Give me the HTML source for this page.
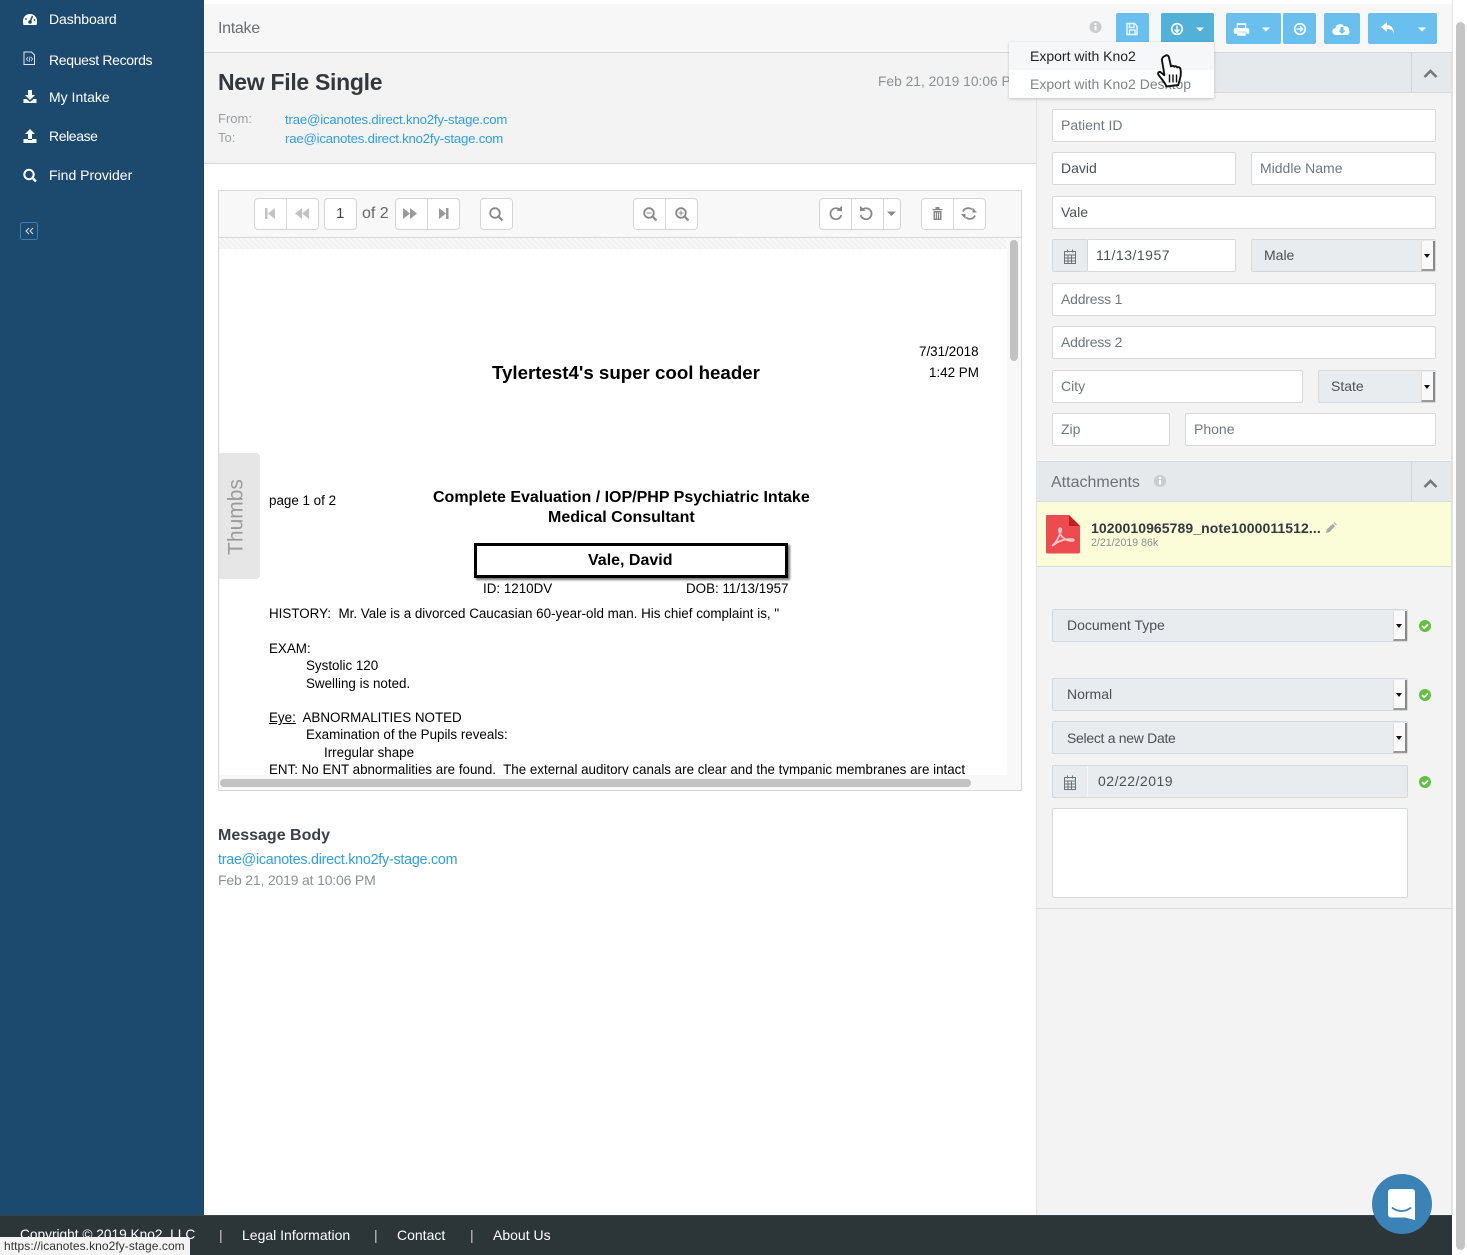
<!DOCTYPE html>
<html><head><meta charset="utf-8"><style>
*{box-sizing:border-box}
html,body{margin:0;padding:0;width:1467px;height:1255px;overflow:hidden;background:#fff}
body{position:relative;font-family:"Liberation Sans",sans-serif;color:#3a4045}
.a{position:absolute}
.t{position:absolute;white-space:nowrap;line-height:18px;font-size:14px}
.n{color:#fff;font-size:14px;left:49px}
.f{position:absolute;background:#fff;border:1px solid #d6d9db;border-radius:2px;font-size:14px;line-height:30px;padding-left:8px;color:#6f787e;height:33px;white-space:nowrap}
.v{color:#4a5055}
.s{background:#e8ecee;color:#4a5055;padding-left:12px}
.s i{position:absolute;right:0;top:1px;width:14px;height:30px;background:#f9f9f9;border-right:2px solid #888;border-bottom:2px solid #999;border-left:1px solid #ddd}
.s i:after{content:"";position:absolute;left:2px;top:13px;border:3.500px solid transparent;border-top:4px solid #111;border-bottom:0}
.b{position:absolute;top:13px;height:31px;background:#69c0ef;border-radius:2px}
.g{position:absolute;top:198px;height:32px;border:1px solid #d5d5d5;border-radius:4px;background:#fff}
.g u{position:absolute;top:0;bottom:0;width:1px;background:#d5d5d5}
.d{position:absolute;white-space:nowrap;color:#000;font-size:13.400px;line-height:16px}
a{color:#2f9ee6;text-decoration:none}
</style></head><body>
<!-- backgrounds -->
<div class="a" style="left:0;top:0;width:204px;height:1215px;background:#1c4a6e"></div>
<div class="a" style="left:204px;top:4px;width:1248px;height:49px;background:#f7f7f7;border-bottom:1px solid #d8d8d8"></div>
<div class="a" style="left:204px;top:53px;width:832px;height:111px;background:#f3f3f3;border-bottom:1px solid #d8d8d8"></div>
<div class="a" style="left:1036px;top:53px;width:416px;height:1162px;background:#f3f3f3;border-left:1px solid #e2e2e2;border-right:1px solid #e2e2e2"></div>
<div class="a" style="left:1037px;top:53px;width:414px;height:40px;background:#e6e9ec;border-bottom:1px solid #d8dbde"></div>
<div class="a" style="left:1411px;top:53px;width:1px;height:40px;background:#d3d6d9"></div>
<div class="a" style="left:1456px;top:22px;width:9px;height:1228px;background:#c4c4c4;border-radius:5px"></div>
<div class="a" style="left:1452px;top:0;width:1px;height:1255px;background:#e4e4e4"></div>

<!-- sidebar -->
<div class="t n" style="top:10px;letter-spacing:-.1px">Dashboard</div>
<div class="t n" style="top:51px;letter-spacing:-.33px">Request Records</div>
<div class="t n" style="top:88px">My Intake</div>
<div class="t n" style="top:127px;letter-spacing:-.4px">Release</div>
<div class="t n" style="top:166px">Find Provider</div>
<svg class="a" style="left:0;top:0" width="204" height="250" fill="#fff">
<path d="M23 21a7 7 0 1 1 14 0c0 1.500-.2 3-.5 4h-13c-.3-1-.5-2.500-.5-4z"/>
<path d="M30 22l2.500-6" stroke="#1c4a6e" stroke-width="1.600"/><circle cx="30" cy="22" r="1.800" fill="#1c4a6e"/>
<circle cx="26" cy="19" r=".9" fill="#1c4a6e"/><circle cx="34.500" cy="20" r=".9" fill="#1c4a6e"/>
<path d="M24 52h7.500l3 3v9.500h-10.500z" fill="none" stroke="#dfe6eb" stroke-width="1"/>
<path d="M28 57l-1.600 2 1.600 2M31 57l1.600 2-1.600 2M30 56.500l-1 5.500" fill="none" stroke="#dfe6eb" stroke-width=".8"/>
<path d="M28 90h4v5h3l-5 5-5-5h3zM23.500 99h3l3.500 3 3.500-3h3v4h-13z"/>
<path d="M30 129l5 5h-3v5h-4v-5h-3zM23.500 139h4.500v1h4v-1h4.500v4h-13z"/>
<circle cx="29" cy="174.500" r="4.700" fill="none" stroke="#fff" stroke-width="2"/><path d="M32.500 178l3.500 3.500" stroke="#fff" stroke-width="2.400"/>
<rect x="20.500" y="222.500" width="17" height="17" rx="2" fill="#1c4a6e" stroke="#3d7fb0"/>
<path d="M29 228l-3 3 3 3M33 228l-3 3 3 3" fill="none" stroke="#d5e2ea" stroke-width="1"/>
</svg>

<!-- top -->
<div class="t" style="left:218px;top:20px;font-size:16px;color:#6b6f72;letter-spacing:-.3px">Intake</div>
<div class="t" style="left:218px;top:68px;font-size:23px;line-height:28px;font-weight:bold;color:#33383c;letter-spacing:-.3px">New File Single</div>
<div class="t" style="left:218px;top:110px;font-size:13px;color:#9a9ea1">From:</div>
<div class="t" style="left:218px;top:129px;font-size:13px;color:#9a9ea1">To:</div>
<a class="t" style="left:285px;top:111px;font-size:13.200px;letter-spacing:-.18px">trae@icanotes.direct.kno2fy-stage.com</a>
<a class="t" style="left:285px;top:130px;font-size:13.200px;letter-spacing:-.2px">rae@icanotes.direct.kno2fy-stage.com</a>
<div class="a" style="left:870px;top:73px;width:139px;height:18px;overflow:hidden"><div class="t" style="left:8px;top:0;color:#8d9194;font-size:13.800px">Feb 21, 2019 10:06 PM</div></div>

<!-- toolbar buttons -->
<div class="b" style="left:1116px;width:33px"></div>
<div class="b" style="left:1161px;width:53px;background:#52b1d8"></div>
<div class="b" style="left:1226px;width:55px"></div>
<div class="b" style="left:1283px;width:33px"></div>
<div class="b" style="left:1324px;width:36px"></div>
<div class="b" style="left:1368px;width:69px"></div>
<svg class="a" style="left:1080px;top:10px" width="370" height="40">
<circle cx="15.500" cy="17" r="6" fill="#c9cbcd"/><rect x="14.500" y="16" width="2" height="4.500" fill="#fff"/><rect x="14.500" y="13" width="2" height="2" fill="#fff"/>
<g fill="none" stroke="#e6f5fd" stroke-width="1.500"><path d="M47 13.500h7.500l2.500 2.500v8.500h-10z"/><path d="M49.500 14v3.500h4.500V14M49.500 24v-4h5.500v4"/></g>
<circle cx="97" cy="19" r="5.300" fill="none" stroke="#fff" stroke-width="1.600"/><path d="M97 15.500v6M94.500 19.500l2.500 2.700 2.500-2.700" fill="none" stroke="#fff" stroke-width="1.300"/>
<path d="M116 17.500h8l-4 4z" fill="#fff"/>
<path d="M157 18.500v-5h9v5M155 18.500h13a1 1 0 0 1 1 1v4h-2.500v-2h-9v2H155a1 1 0 0 1-1-1v-3a1 1 0 0 1 1-1zM157.500 22.500h8v3h-8z" fill="#fff" stroke="#fff" stroke-width=".5"/><path d="M158 15h7v3h-7z" fill="#69c0ef"/>
<path d="M182 17.500h8l-4 4z" fill="#fff"/>
<circle cx="220" cy="19" r="5.300" fill="none" stroke="#fff" stroke-width="1.600"/><path d="M216.500 19h6M220 16.500l2.700 2.500-2.700 2.500" fill="none" stroke="#fff" stroke-width="1.300"/>
<path d="M256 25a3.500 3.500 0 0 1-.5-7 4.500 4.500 0 0 1 8.500-1.500 3.700 3.700 0 0 1 5 3.500 4 4 0 0 1-1 5z" fill="#fff"/><path d="M260.500 17h3v3.500h2l-3.500 3.500-3.500-3.500h2z" fill="#69c0ef"/>
<path d="M307 12l-6 5 6 5v-3c4 0 6 1 7 5 0-6-3-9-7-9z" fill="#fff"/>
<path d="M338 17.500h8l-4 4z" fill="#fff"/>
</svg>
<!-- right panel top chevron -->
<svg class="a" style="left:1420px;top:65px" width="22" height="16"><path d="M4.500 12l6-6 6 6" fill="none" stroke="#777" stroke-width="2.600"/></svg>

<!-- form -->
<div class="f" style="left:1052px;top:109px;width:384px">Patient ID</div>
<div class="f v" style="left:1052px;top:152px;width:184px">David</div>
<div class="f" style="left:1251px;top:152px;width:185px">Middle Name</div>
<div class="f v" style="left:1052px;top:196px;width:384px">Vale</div>
<div class="f" style="left:1052px;top:239px;width:36px;background:#e8ecee;padding:0"></div>
<div class="f v" style="left:1087px;top:239px;width:149px;letter-spacing:.5px">11/13/1957</div>
<div class="f s" style="left:1251px;top:239px;width:185px">Male<i></i></div>
<div class="f" style="left:1052px;top:283px;width:384px;letter-spacing:-.2px">Address 1</div>
<div class="f" style="left:1052px;top:326px;width:384px;letter-spacing:-.2px">Address 2</div>
<div class="f" style="left:1052px;top:370px;width:251px">City</div>
<div class="f s" style="left:1318px;top:370px;width:118px">State<i></i></div>
<div class="f" style="left:1052px;top:413px;width:118px">Zip</div>
<div class="f" style="left:1185px;top:413px;width:251px">Phone</div>

<!-- attachments -->
<div class="a" style="left:1037px;top:461px;width:414px;height:41px;background:#e6e9ec;border-top:1px solid #d8dbde;border-bottom:1px solid #d8dbde"></div>
<div class="a" style="left:1411px;top:462px;width:1px;height:39px;background:#d3d6d9"></div>
<div class="t" style="left:1051px;top:474px;font-size:16px;color:#6b7277">Attachments</div>
<svg class="a" style="left:1150px;top:472px" width="20" height="18"><circle cx="10" cy="9" r="6" fill="#c9cbcd"/><rect x="9" y="8" width="2" height="4.500" fill="#fff"/><rect x="9" y="5" width="2" height="2" fill="#fff"/></svg>
<svg class="a" style="left:1420px;top:475px" width="22" height="16"><path d="M4.500 12l6-6 6 6" fill="none" stroke="#777" stroke-width="2.600"/></svg>
<div class="a" style="left:1037px;top:502px;width:414px;height:65px;background:#fbfdd9;border-bottom:1px solid #d8dbde"></div>
<svg class="a" style="left:1046px;top:514px" width="36" height="42">
<path d="M1 1h22l11 11v26a1.500 1.500 0 0 1-1.500 1.500h-31A1.500 1.500 0 0 1 0 38V2a1 1 0 0 1 1-1z" fill="#ee4b50"/><path d="M23 1l11 11h-11z" fill="#c41f1f"/>
<path d="M6 32c4-3 7-9 9-15 1-3-2-4-2-1 0 5 6 11 13 11 3 0 2-2-1-2-6 0-13 2-19 7z" fill="none" stroke="#f7c9ca" stroke-width="1.800"/>
</svg>
<div class="t" style="left:1091px;top:519px;font-size:14px;font-weight:bold;color:#33383c;letter-spacing:.08px">1020010965789_note1000011512...</div>
<svg class="a" style="left:1324px;top:521px" width="14" height="14"><path d="M2 12l.7-3.200 6-6 2.500 2.500-6 6zM9.500 2l1-.8 2.300 2.300-.8 1z" fill="#a8aaa8"/></svg>
<div class="t" style="left:1091px;top:534px;font-size:10.600px;color:#8a8f92">2/21/2019 86k</div>

<div class="f s" style="left:1052px;top:609px;width:356px;padding-left:14px">Document Type<i></i></div>
<div class="f s" style="left:1052px;top:678px;width:356px;padding-left:14px">Normal<i></i></div>
<div class="f s" style="left:1052px;top:721px;width:356px;padding-left:14px;letter-spacing:-.3px;line-height:32px">Select a new Date<i></i></div>
<div class="f" style="left:1052px;top:765px;width:356px;background:#e8ecee;padding:0"></div>
<div class="a" style="left:1087px;top:766px;width:1px;height:31px;background:#f7f7f7"></div>
<div class="t" style="left:1098px;top:772px;color:#4a5055;letter-spacing:.5px">02/22/2019</div>
<div class="f" style="left:1052px;top:808px;width:356px;height:90px"></div>
<div class="a" style="left:1037px;top:908px;width:414px;height:1px;background:#dcdcdc"></div>
<svg class="a" style="left:1040px;top:240px" width="400" height="560">
<g fill="none" stroke="#6d7377" stroke-width="1">
<path d="M24.500 11.500h11v12h-11zM24.500 15h11M24.500 18h11M24.500 21h11M28 15v8.500M31.500 15v8.500M27.500 9.500v3M32.500 9.500v3"/>
<path d="M24.500 537.500h11v12h-11zM24.500 541h11M24.500 544h11M24.500 547h11M28 541v8.500M31.500 541v8.500M27.500 535.500v3M32.500 535.500v3"/>
</g>
<g><circle cx="385" cy="386" r="6" fill="#62c13f"/><path d="M382 386l2.200 2.200 3.800-3.800" fill="none" stroke="#fff" stroke-width="1.700"/></g>
<g><circle cx="385" cy="455" r="6" fill="#62c13f"/><path d="M382 455l2.200 2.200 3.800-3.800" fill="none" stroke="#fff" stroke-width="1.700"/></g>
<g><circle cx="385" cy="542" r="6" fill="#62c13f"/><path d="M382 542l2.200 2.200 3.800-3.800" fill="none" stroke="#fff" stroke-width="1.700"/></g>
</svg>

<!-- viewer -->
<div class="a" style="left:218px;top:190px;width:804px;height:601px;background:#f8f8f8;border:1px solid #d8d8d8"></div>
<div class="a" style="left:219px;top:237px;width:802px;height:1px;background:#d8d8d8"></div>
<div class="a" style="left:219px;top:238px;width:787px;height:11px;background:repeating-linear-gradient(45deg,#f1f1f1 0 2px,#f8f8f8 2px 4px)"></div>
<div class="g" style="left:254px;width:65px;"><u style="left:31px"></u></div>
<div class="g" style="left:324px;width:33px"></div>
<div class="t" style="left:336px;top:205px;font-size:15px;color:#444">1</div>
<div class="t" style="left:362px;top:205px;font-size:16px;color:#666">of 2</div>
<div class="g" style="left:395px;width:65px"><u style="left:31px"></u></div>
<div class="g" style="left:480px;width:33px"></div>
<div class="g" style="left:633px;width:65px"><u style="left:31px"></u></div>
<div class="g" style="left:819px;width:82px"><u style="left:31px"></u><u style="left:63px"></u></div>
<div class="g" style="left:921px;width:65px"><u style="left:31px"></u></div>
<svg class="a" style="left:218px;top:198px" width="790" height="32">
<g fill="#c2c2c2"><path d="M47 10h2.500v11H47zM57 10v11l-7-5.500z"/><path d="M77 15.500l7-5.500v11zM84 15.500l7-5.500v11z"/></g>
<g fill="#999"><path d="M185 10l7 5.500-7 5.500zM192 10l7 5.500-7 5.500z"/><path d="M221 10l7 5.500-7 5.500zM228 10h2.500v11H228z"/></g>
<g fill="none" stroke="#888" stroke-width="1.800">
<circle cx="277" cy="15" r="4.800"/><path d="M280.500 18.500l4 4" stroke-width="2.200"/>
<circle cx="431" cy="15" r="4.800"/><path d="M434.500 18.500l4 4" stroke-width="2.200"/><path d="M428.500 15h5" stroke-width="1"/>
<circle cx="463" cy="15" r="4.800"/><path d="M466.500 18.500l4 4" stroke-width="2.200"/><path d="M460.500 15h5M463 12.500v5" stroke-width="1"/>
<path d="M622 12a5.500 5.500 0 1 0 1.300 5"/>
<path d="M644 12a5.500 5.500 0 1 1-1.300 5"/>
<path transform="translate(12 0)" d="M745 17.500c-1.500 3.500-6 4.500-9 2M733 13.500c1.500-3.500 6-4.500 9-2" stroke-width="1.700"/>
</g>
<g fill="#888">
<path d="M618.500 12.800l5.500.5v-5.500zM647.500 12.800l-5.500.5v-5.500z"/>
<path d="M669 13.500h9l-4.500 4.500z"/>
<path d="M714.500 11h10v1.300h-10zM717.500 9h4v2h-4zM715.500 13h8v9h-8z"/>
<path transform="translate(12 0)" d="M742.500 9.500v5h4.500zM735.500 21v-5H731z"/>
</g>
<path d="M717.500 14.500v6M719.500 14.500v6M721.500 14.500v6" stroke="#fff" stroke-width=".8"/>
</svg>

<!-- document -->
<div class="a" style="left:220px;top:249px;width:787px;height:526px;background:#fff;overflow:hidden">
<div class="d" style="left:699px;top:95px">7/31/2018</div>
<div class="d" style="left:709px;top:116px">1:42 PM</div>
<div class="d" style="left:272px;top:113px;font-size:18.700px;line-height:22px;font-weight:bold">Tylertest4's super cool header</div>
<div class="d" style="left:49px;top:244px">page 1 of 2</div>
<div class="d" style="left:213px;top:239px;font-size:16px;line-height:18px;font-weight:bold;transform:translateY(1px)">Complete Evaluation / IOP/PHP Psychiatric Intake</div>
<div class="d" style="left:328px;top:259px;font-size:16px;line-height:18px;font-weight:bold;transform:translateY(1px)">Medical Consultant</div>
<div class="a" style="left:254px;top:294px;width:314px;height:35px;background:#fff;border:3px solid #000;box-shadow:2px 2px 2px #777"></div>
<div class="d" style="left:368px;top:303px;font-size:16px;line-height:18px;font-weight:bold">Vale, David</div>
<div class="d" style="left:263px;top:332px">ID: 1210DV</div>
<div class="d" style="left:466px;top:332px">DOB: 11/13/1957</div>
<div class="d" style="left:49px;top:357px">HISTORY:&nbsp; Mr. Vale is a divorced Caucasian 60-year-old man. His chief complaint is, "</div>
<div class="d" style="left:49px;top:392px">EXAM:</div>
<div class="d" style="left:86px;top:409px">Systolic 120</div>
<div class="d" style="left:86px;top:427px">Swelling is noted.</div>
<div class="d" style="left:49px;top:461px"><span style="text-decoration:underline">Eye:</span>&nbsp; ABNORMALITIES NOTED</div>
<div class="d" style="left:86px;top:478px">Examination of the Pupils reveals:</div>
<div class="d" style="left:104px;top:496px">Irregular shape</div>
<div class="d" style="left:49px;top:513px;font-size:13.360px">ENT: No ENT abnormalities are found.&nbsp; The external auditory canals are clear and the tympanic membranes are intact</div>
</div>
<div class="a" style="left:1010px;top:240px;width:8px;height:121px;background:#c2c2c2;border-radius:4px"></div>
<div class="a" style="left:220px;top:779px;width:751px;height:8px;background:#c2c2c2;border-radius:4px"></div>
<div class="a" style="left:219px;top:453px;width:41px;height:126px;background:#e6e6e6;border-radius:0 4px 4px 0"></div>
<div class="t" style="left:184px;top:505px;width:105px;height:24px;line-height:24px;font-size:21px;text-align:center;color:#9b9b9b;transform:rotate(-90deg)">Thumbs</div>

<!-- message -->
<div class="t" style="left:218px;top:827px;font-size:16px;font-weight:bold;color:#3a4045">Message Body</div>
<a class="t" style="left:218px;top:851px;font-size:14.300px;letter-spacing:-.24px">trae@icanotes.direct.kno2fy-stage.com</a>
<div class="t" style="left:218px;top:871px;font-size:14px;color:#8d9194;letter-spacing:-.18px">Feb 21, 2019 at 10:06 PM</div>

<!-- dropdown -->
<div class="a" style="left:1009px;top:42px;width:205px;height:56px;background:#fff;box-shadow:0 1px 3px rgba(0,0,0,.2)"></div>
<div class="a" style="left:1009px;top:42px;width:205px;height:28px;background:#f6f7f9"></div>
<div class="t" style="left:1030px;top:47px;color:#222">Export with Kno2</div>
<div class="t" style="left:1030px;top:75px;color:#7f8487">Export with Kno2 Desktop</div>
<svg class="a" style="left:1154px;top:52px" width="36" height="40">
<path d="M11 4c1.500-1.500 3.500-.5 4 1.500l2 9c1-1 2.500-1 3.300.3 1-1 2.500-.6 3 .7 1-.7 2.500-.3 3 1 .8 3 .7 7-.5 11l-1.500 5.500-12 1.500c-1-4-5-7.500-8-12-.7-2 1-3.200 2.500-2.200l3.500 3c-.5-6-1.800-11-2.300-15-.2-2 1-3.600 3-4.300z" fill="#fff" stroke="#111" stroke-width="1.900" stroke-linejoin="round"/>
<path d="M15.500 22.500v8M19 22.500v8M22.500 22.500v8" stroke="#111" stroke-width="1.400"/>
</svg>

<!-- footer -->
<div class="a" style="left:0;top:1215px;width:1452px;height:40px;background:#2c3538;border-top:1px solid #3a4245"></div>
<div class="a" style="left:1452px;top:1215px;width:4px;height:40px;background:#fff"></div>
<div class="t" style="left:20px;top:1226px;color:#fff;font-size:13.700px">Copyright © 2019 Kno2, LLC</div>
<div class="t" style="left:219px;top:1226px;color:#ccc">|</div>
<div class="t" style="left:242px;top:1226px;color:#fff">Legal Information</div>
<div class="t" style="left:374px;top:1226px;color:#ccc">|</div>
<div class="t" style="left:397px;top:1226px;color:#fff">Contact</div>
<div class="t" style="left:470px;top:1226px;color:#ccc">|</div>
<div class="t" style="left:493px;top:1226px;color:#fff">About Us</div>
<div class="a" style="left:0;top:1237px;width:190px;height:18px;background:#f4f4f4;border-radius:0 3px 0 0"></div>
<div class="t" style="left:4px;top:1238px;font-size:12px;line-height:17px;color:#333;letter-spacing:.06px">https://icanotes.kno2fy-stage.com</div>

<!-- chat -->
<svg class="a" style="left:1365px;top:1168px" width="74" height="74">
<circle cx="37" cy="36" r="30" fill="#3b83b7"/>
<path d="M26 21h21a3 3 0 0 1 3 3v28l-10-2.500H26a3 3 0 0 1-3-3V24a3 3 0 0 1 3-3z" fill="#fff"/>
<path d="M27.500 40c5.500 4 12.500 4 18 0" fill="none" stroke="#3b83b7" stroke-width="1.800" stroke-linecap="round"/>
</svg>
</body></html>
